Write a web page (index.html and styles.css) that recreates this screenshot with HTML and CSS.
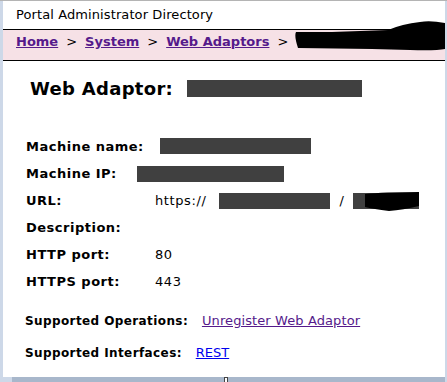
FILE: index.html
```html
<!DOCTYPE html>
<html lang="en">
<head>
    <meta charset="UTF-8">
    <title>Portal Administrator Directory</title>
    <link rel="stylesheet" href="styles.css">
</head>
<body>
    <div class="frame">
        <div class="page">
            <div class="title">Portal Administrator Directory</div>

            <div class="breadcrumb">
                <a href="#" class="visited">Home</a>
                <span class="sep">&gt;</span>
                <a href="#" class="visited">System</a>
                <span class="sep">&gt;</span>
                <a href="#" class="visited">Web Adaptors</a>
                <span class="sep">&gt;</span>
                <svg class="scribble" width="160" height="34" viewBox="0 0 160 34">
                    <path d="M4 14 Q2 18 6 30 L80 31 L118 32 Q150 33 156 30 L158 6 Q140 2 128 4 Q110 6 96 12 L40 14 Z" fill="#000"/>
                </svg>
            </div>

            <h1 class="heading">Web Adaptor: <span class="redact heading-redact"></span></h1>

            <div class="props">
                <div class="label">Machine name:</div>
                <div class="value"><span class="redact name-redact"></span></div>

                <div class="label">Machine IP:</div>
                <div class="value"><span class="redact ip-redact"></span></div>

                <div class="label">URL:</div>
                <div class="value url">
                    https://
                    <span class="redact host-redact"></span>
                    /
                    <span class="redact ctx-redact">
                        <svg class="ctx-scribble" width="58" height="22" viewBox="0 0 58 22">
                            <path d="M2 3 Q20 1 56 1 L56 15 Q40 19 26 20 Q10 18 2 16 Z" fill="#000"/>
                        </svg>
                    </span>
                </div>

                <div class="label">Description:</div>
                <div class="value"></div>

                <div class="label">HTTP port:</div>
                <div class="value">80</div>

                <div class="label">HTTPS port:</div>
                <div class="value">443</div>
            </div>

            <div class="supported">
                <div><b>Supported Operations:</b> <a href="#" class="visited op-link">Unregister Web Adaptor</a></div>
                <div><b>Supported Interfaces:</b> <a href="#" class="rest-link">REST</a></div>
            </div>
        </div>
        <div class="bottom-bar"><span class="grip"></span></div>
    </div>
</body>
</html>
```

FILE: styles.css
```css
* {
    margin: 0;
    padding: 0;
    box-sizing: border-box;
}

body {
    font-family: "DejaVu Sans", Verdana, sans-serif;
    font-size: 13px;
    color: #000;
    background: #cdd8e8;
    width: 447px;
    height: 382px;
    overflow: hidden;
}

.frame {
    height: 382px;
    border-top: 1px solid #b4b4b4;
    padding-left: 3px;
    display: flex;
    flex-direction: column;
}

.page {
    background: #fff;
    height: 376px;
    width: 442px;
    overflow: hidden;
}

.title {
    padding: 6px 0 0 13px;
    height: 28px;
    letter-spacing: 0.1px;
}

.breadcrumb {
    position: relative;
    height: 32px;
    background: #f6e1e6;
    border-top: 1px solid #000;
    border-bottom: 1px solid #000;
    padding: 4px 0 0 13px;
    font-weight: bold;
    display: flex;
    align-items: flex-start;
}

.breadcrumb a {
    color: #551a8b;
}

.sep {
    font-weight: normal;
    margin: 0 8px;
}

.scribble {
    position: absolute;
    left: 289px;
    top: -12px;
}

.heading {
    font-size: 18px;
    font-weight: bold;
    padding: 17px 0 0 27px;
    height: 78px;
    display: flex;
    align-items: flex-start;
    letter-spacing: 0.3px;
}

.redact {
    display: inline-block;
    background: #404040;
    vertical-align: middle;
}

.heading-redact {
    width: 175px;
    height: 17px;
    margin: 2px 0 0 14px;
}

.props {
    display: grid;
    grid-template-columns: 129px 1fr;
    grid-auto-rows: 27px;
    padding-left: 23px;
}

.label {
    font-weight: bold;
    letter-spacing: 0.5px;
}

.value {
    display: flex;
    align-items: flex-start;
    letter-spacing: 0.6px;
}

.name-redact {
    width: 151px;
    height: 16px;
    margin: -1px 0 0 5px;
}

.ip-redact {
    width: 147px;
    height: 16px;
    margin: 0 0 0 -18px;
}

.host-redact {
    width: 111px;
    height: 16px;
    margin: 0 9px 0 13px;
}

.ctx-redact {
    position: relative;
    width: 66px;
    height: 16px;
    margin-left: 9px;
}

.ctx-scribble {
    position: absolute;
    left: 10px;
    top: -2px;
}

.supported {
    padding: 12px 0 0 22px;
    font-size: 12px;
    display: flex;
    flex-direction: column;
    gap: 17px;
}

.supported b {
    margin-right: 10px;
    letter-spacing: 0.4px;
}

.supported a {
    font-size: 13px;
}

.visited {
    color: #551a8b;
}

.rest-link {
    color: #0000ee;
}

.op-link {
    letter-spacing: 0.1px;
}

.bottom-bar {
    height: 5px;
    margin-left: 9px;
    width: 433px;
    background: #a8b7cb;
    position: relative;
}

.grip {
    position: absolute;
    left: 212px;
    top: 0;
    width: 4px;
    height: 5px;
    background: #fff;
    border: 1px solid #444;
    border-bottom: none;
}
```
